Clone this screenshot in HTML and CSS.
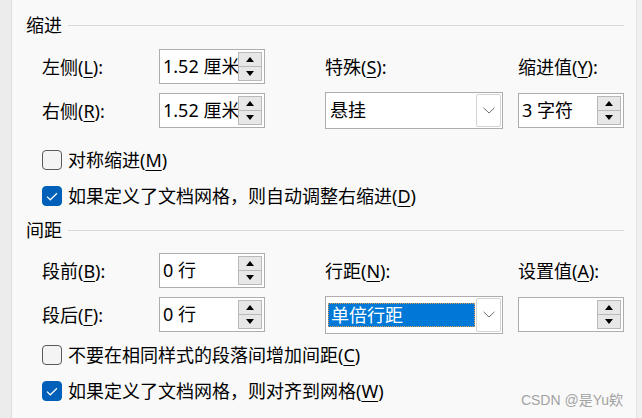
FILE: index.html
```html
<!DOCTYPE html>
<html lang="zh-CN">
<head>
<meta charset="utf-8">
<title>段落</title>
<link rel="stylesheet" href="styles.css">
</head>
<body>
<div class="frame">
  <div class="edge-left"></div>
  <main class="panel">
    <div class="group-head head-indent"><span class="group-title">缩进</span><span class="group-line"></span></div>
    <div class="grid grid-indent">
      <div class="label r1 c1">左侧(<u>L</u>):</div>
      <div class="spin r1 c2"><span class="spin-text">1.52 厘米</span><span class="spin-btns"><span class="sb up"></span><span class="sb down"></span></span></div>
      <div class="label r1 c4">特殊(<u>S</u>):</div>
      <div class="label r1 c6">缩进值(<u>Y</u>):</div>
      <div class="label r2 c1">右侧(<u>R</u>):</div>
      <div class="spin r2 c2"><span class="spin-text">1.52 厘米</span><span class="spin-btns"><span class="sb up"></span><span class="sb down"></span></span></div>
      <div class="combo r2 c4"><span class="combo-text">悬挂</span><span class="combo-btn"><svg width="12" height="7" viewBox="0 0 12 7"><path d="M0.5 0.8 L6 6 L11.5 0.8" fill="none" stroke="#6d6d6d" stroke-width="1"/></svg></span></div>
      <div class="spin r2 c6 short"><span class="spin-text">3 字符</span><span class="spin-btns"><span class="sb up"></span><span class="sb down"></span></span></div>
    </div>
    <div class="check check-1"><span class="box"></span><span>对称缩进(<u>M</u>)</span></div>
    <div class="check check-2"><span class="box on"><svg width="12" height="9" viewBox="0 0 12 9"><path d="M1 4.6 L4.3 7.8 L11 1.2" fill="none" stroke="#fff" stroke-width="1.2"/></svg></span><span>如果定义了文档网格，则自动调整右缩进(<u>D</u>)</span></div>

    <div class="group-head head-spacing"><span class="group-title">间距</span><span class="group-line"></span></div>
    <div class="grid grid-spacing">
      <div class="label r1 c1">段前(<u>B</u>):</div>
      <div class="spin r1 c2"><span class="spin-text">0 行</span><span class="spin-btns"><span class="sb up"></span><span class="sb down"></span></span></div>
      <div class="label r1 c4">行距(<u>N</u>):</div>
      <div class="label r1 c6">设置值(<u>A</u>):</div>
      <div class="label r2 c1">段后(<u>F</u>):</div>
      <div class="spin r2 c2"><span class="spin-text">0 行</span><span class="spin-btns"><span class="sb up"></span><span class="sb down"></span></span></div>
      <div class="combo tall r2 c4"><span class="combo-text selected">单倍行距</span><span class="combo-btn"><svg width="12" height="7" viewBox="0 0 12 7"><path d="M0.5 0.8 L6 6 L11.5 0.8" fill="none" stroke="#6d6d6d" stroke-width="1"/></svg></span></div>
      <div class="spin r2 c6 short"><span class="spin-text"></span><span class="spin-btns"><span class="sb up"></span><span class="sb down"></span></span></div>
    </div>
    <div class="check check-3"><span class="box"></span><span>不要在相同样式的段落间增加间距(<u>C</u>)</span></div>
    <div class="check check-4"><span class="box on"><svg width="12" height="9" viewBox="0 0 12 9"><path d="M1 4.6 L4.3 7.8 L11 1.2" fill="none" stroke="#fff" stroke-width="1.2"/></svg></span><span>如果定义了文档网格，则对齐到网格(<u>W</u>)</span></div>
    <div class="watermark">CSDN @是Yu欸</div>
  </main>
  <div class="edge-right"></div>
</div>
</body>
</html>
```

FILE: styles.css
```css
html, body {
  margin: 0;
  padding: 0;
}
body {
  width: 642px;
  height: 418px;
  overflow: hidden;
  background: #f9f9f9;
  font-family: "Noto Sans", "Noto Sans CJK SC", sans-serif;
  font-size: 18px;
  color: #000;
}
.frame {
  display: flex;
  width: 642px;
  height: 418px;
}
.edge-left {
  width: 11px;
  flex: none;
  background: #ececec;
  border-right: 1px solid #dedede;
}
.edge-right {
  width: 5px;
  flex: none;
  background: #f0f0f0;
  border-left: 1px solid #e4e4e4;
}
.panel {
  flex: 1;
  position: relative;
  padding: 13px 0 0 14px;
  box-sizing: border-box;
}
u {
  text-decoration-thickness: 1px;
  text-underline-offset: 3px;
}
.group-head {
  display: flex;
  align-items: center;
  height: 24px;
  margin-right: 12px;
  gap: 6px;
}
.group-title {
  line-height: 24px;
  font-size: 18px;
}
.group-line {
  flex: 1;
  height: 1px;
  background: #d9d9d9;
}
.head-spacing {
  margin-top: 12px;
}
.grid {
  display: grid;
  grid-template-columns: 117px 106px 60px 178px 15px 106px;
  margin-left: 16px;
  align-items: center;
}
.grid-indent {
  margin-top: 12px;
  grid-template-rows: 35px 36px;
  row-gap: 8px;
}
.grid-spacing {
  margin-top: 11px;
  grid-template-rows: 35px 35px;
  row-gap: 9px;
}
.r1 { grid-row: 1; }
.r2 { grid-row: 2; }
.c1 { grid-column: 1; }
.c2 { grid-column: 2; }
.c4 { grid-column: 4; }
.c6 { grid-column: 6; }
.label {
  line-height: 24px;
  white-space: nowrap;
}
.grid .label.c1 {
  padding-top: 1px;
}
.spin {
  height: 35px;
  box-sizing: border-box;
  border: 1px solid #adadad;
  background: #fff;
  display: flex;
  align-items: stretch;
  overflow: hidden;
}
.spin-text {
  flex: 1;
  overflow: hidden;
  white-space: nowrap;
  padding-left: 3px;
  line-height: 32px;
}
.spin-btns {
  flex: none;
  width: 24px;
  margin: 2px 2px 2px 0;
  display: flex;
  flex-direction: column;
}
.sb {
  flex: 1;
  box-sizing: border-box;
  border: 1px solid #b9b9b9;
  background: #e7e7e7;
  display: flex;
  align-items: center;
  justify-content: center;
}
.sb.down {
  border-top: none;
}
.sb::before {
  content: "";
  width: 0;
  height: 0;
  border-left: 4.5px solid transparent;
  border-right: 4.5px solid transparent;
}
.sb.up::before {
  border-bottom: 5px solid #000;
}
.sb.down::before {
  border-top: 5px solid #000;
}
.combo {
  height: 37px;
  box-sizing: border-box;
  border: 1px solid #adadad;
  background: #fff;
  display: flex;
  align-items: center;
  padding: 1px;
}
.combo.tall {
  height: 38px;
}
.combo-text {
  flex: 1;
  padding-left: 3px;
  line-height: 24px;
  white-space: nowrap;
}
.combo-text.selected {
  align-self: center;
  margin-left: 1px;
  margin-right: 1px;
  padding-left: 2px;
  height: 24px;
  line-height: 22px;
  box-sizing: border-box;
  background: #0078d7;
  color: #fff;
  border: 1px dotted #e59b4c;
}
.combo-btn {
  flex: none;
  width: 25px;
  align-self: stretch;
  box-sizing: border-box;
  border: 1px solid #d4d4d4;
  border-radius: 2px;
  background: #fff;
  display: flex;
  align-items: center;
  justify-content: center;
}
.check {
  display: flex;
  align-items: center;
  gap: 6px;
  height: 20px;
  margin-left: 16px;
  line-height: 24px;
  white-space: nowrap;
}
.check-1 { margin-top: 22px; }
.check-2 { margin-top: 16px; }
.check-3 { margin-top: 13px; }
.check-4 { margin-top: 16px; }
.box {
  flex: none;
  width: 20px;
  height: 20px;
  box-sizing: border-box;
  border: 1px solid #5a5a5a;
  border-radius: 4px;
  background: #f4f4f4;
  display: flex;
  align-items: center;
  justify-content: center;
}
.box.on {
  background: #005fb8;
  border-color: #005fb8;
}
.watermark {
  position: absolute;
  right: 13px;
  bottom: 9px;
  font-family: "Liberation Sans", "Noto Sans CJK SC", sans-serif;
  font-size: 14px;
  line-height: 18px;
  color: #a3a3a3;
}
```
